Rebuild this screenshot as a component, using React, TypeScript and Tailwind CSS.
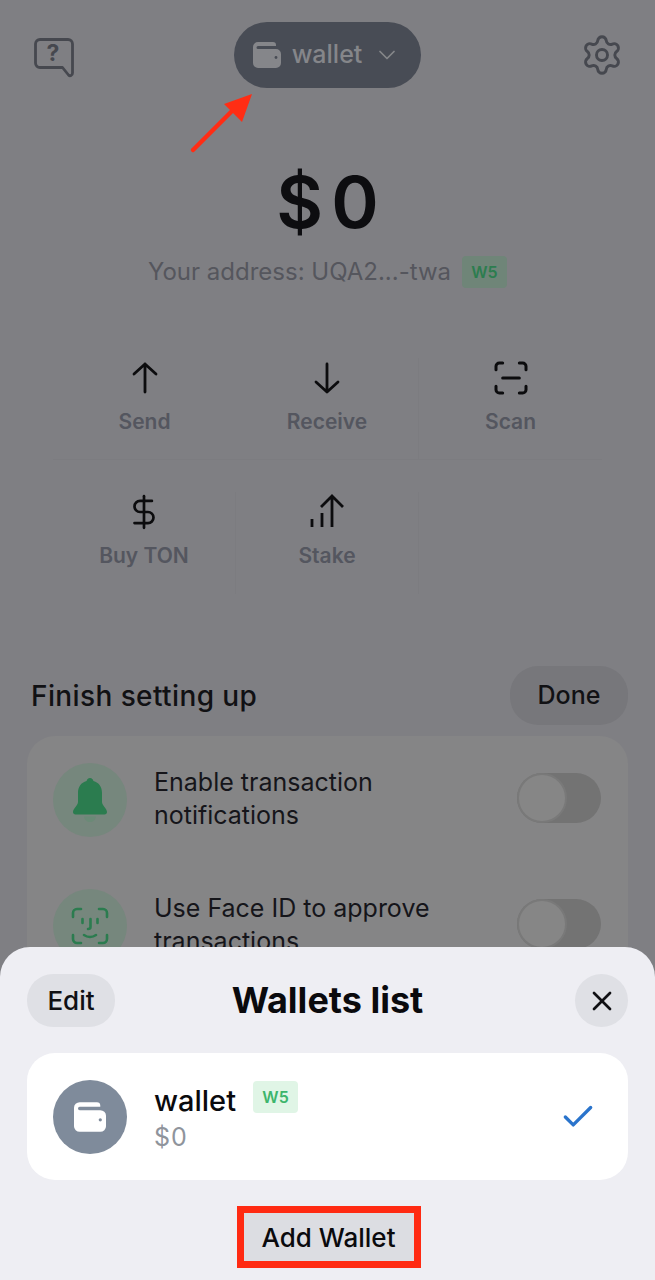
import { Check, ChevronDown, DollarSign, ScanLine, Settings, X } from 'lucide-react';
import type { ReactNode } from 'react';

function WalletIcon({ className, hole }: { className?: string; hole: string }) {
  return (
    <svg viewBox="0 0 28 26" className={className} fill="currentColor">
      <path d="M5 0h15a3 3 0 0 1 3 3v1H5a1.5 1.5 0 0 0 0 3h18a5 5 0 0 1 5 5v9a5 5 0 0 1-5 5H5a5 5 0 0 1-5-5V5a5 5 0 0 1 5-5z" />
      <circle cx="23" cy="15.5" r="1.4" fill={hole} />
    </svg>
  );
}

function HelpIcon() {
  return (
    <svg viewBox="0 0 40 40" className="w-10 h-10" fill="none" stroke="#46484f" strokeWidth="2.8" strokeLinejoin="round">
      <path d="M6 1.500h28a4.500 4.500 0 0 1 4.500 4.500v29c0 2.500-2.500 3.500-4 2l-6-7.500H6A4.500 4.500 0 0 1 1.500 25V6A4.500 4.500 0 0 1 6 1.500z" />
      <text x="19" y="23" textAnchor="middle" fontSize="23" fontWeight="700" fill="#46484f" stroke="none" fontFamily="Inter, sans-serif">?</text>
    </svg>
  );
}

function ArrowIcon({ down }: { down?: boolean }) {
  return (
    <svg viewBox="0 0 40 40" className="w-10 h-10" fill="none" stroke="#0c0c0e" strokeWidth="2.8" strokeLinecap="round" strokeLinejoin="round">
      <path d={down ? 'M20 6v28M9 24l11 10 11-10' : 'M20 34V6M9 16 20 6l11 10'} />
    </svg>
  );
}

function StakeIcon() {
  return (
    <svg viewBox="0 0 38 38" className="w-[38px] h-[38px]" fill="none" stroke="#0c0c0e" strokeWidth="2.800">
      <path d="M4 34v-8M14 34V20M24 34V4M13 14 24 3l11 11" />
    </svg>
  );
}

function BellIcon() {
  return (
    <svg viewBox="0 0 34 44" className="w-[34px] h-11" fill="#2b7c4f">
      <path d="M17 0c2 0 3 1.400 3.400 3C26 4.500 29 9 29 15v9c0 3 5 7 5 10 0 1.500-1 2.500-2.500 2.500h-29C1 36.500 0 35.500 0 34c0-3 5-7 5-10v-9C5 9 8 4.500 13.600 3 14 1.400 15 0 17 0z" />
      <path d="M11 38.500h12c-.5 3.500-3 5.500-6 5.500s-5.500-2-6-5.500z" fill="#6b8a77" />
    </svg>
  );
}

function FaceIcon() {
  return (
    <svg viewBox="0 0 38 38" className="w-[38px] h-[38px]" fill="none" stroke="#2b7c4f" strokeWidth="2.600" strokeLinecap="round" strokeLinejoin="round">
      <path d="M2 10V6a4 4 0 0 1 4-4h4M28 2h4a4 4 0 0 1 4 4v4M36 28v4a4 4 0 0 1-4 4h-4M10 36H6a4 4 0 0 1-4-4v-4" />
      <path d="M11.500 12v4M26.500 12v4M19.500 12v8c0 1.500-1 2-2.500 2M13 28c3.500 2.500 8.500 2.500 12 0" />
    </svg>
  );
}

function Action({ icon, label, className }: { icon: ReactNode; label: string; className?: string }) {
  return (
    <div className={`flex flex-col items-center h-[102px] border-[#7c7c80] ${className ?? ''}`}>
      <div className="h-10 flex items-center justify-center">{icon}</div>
      <span className="mt-3 text-[21px] leading-6 font-semibold text-[#54565f]">{label}</span>
    </div>
  );
}

function Toggle() {
  return (
    <div className="w-[84px] h-[50px] rounded-full bg-[#737373] shrink-0">
      <div className="w-[50px] h-[50px] rounded-full bg-[#868686] border-2 border-[#797979]" />
    </div>
  );
}

function SetupRow({ icon, lines }: { icon: ReactNode; lines: string[] }) {
  return (
    <div className="flex items-start h-[126px]">
      <div className="w-[74px] h-[74px] rounded-full bg-[#76877d] flex items-center justify-center shrink-0">{icon}</div>
      <div className="ml-[27px] flex-1 text-[25px] leading-[33px] text-[#15151a] mt-[3px]">
        {lines.map((l) => (
          <div key={l}>{l}</div>
        ))}
      </div>
      <div className="mt-[10px]">
        <Toggle />
      </div>
    </div>
  );
}

export default function App() {
  return (
    <div className="relative w-[655px] h-[1280px] overflow-hidden bg-[#7f7f83] font-['Inter',sans-serif]">
      <header className="flex items-start justify-between pl-[34px] pr-[31px] pt-[22px] h-[140px]">
        <div className="mt-4">
          <HelpIcon />
        </div>
        <button className="w-[187px] h-[66px] rounded-[33px] bg-[#484c55] flex items-center justify-center gap-[11px] text-[#85868a]">
          <WalletIcon className="w-[28px] h-[26px]" hole="#484c55" />
          <span className="text-[25px] font-medium">wallet</span>
          <ChevronDown className="w-7 h-7" strokeWidth={1.5} />
        </button>
        <Settings className="mt-[11px] w-[44px] h-[44px] text-[#46484f]" strokeWidth={1.6} />
      </header>

      <div className="flex flex-col items-center">
        <div className="mt-[26px] h-[72px] pl-2 flex items-center text-[72px] font-semibold text-[#0d0d10] tracking-[8px] leading-none">$0</div>
        <div className="mt-[18px] h-8 flex items-center gap-[11px]">
          <span className="text-[24px] text-[#55565d]">Your address: UQA2...-twa</span>
          <span className="w-[45px] h-8 rounded bg-[#6f8578] flex items-center justify-center text-[16px] font-semibold text-[#2c7d4f]">W5</span>
        </div>
      </div>

      <div className="grid grid-cols-3 gap-y-8 w-[549px] ml-[53px] mt-[70px]">
        <Action icon={<ArrowIcon />} label="Send" className="border-b" />
        <Action icon={<ArrowIcon down />} label="Receive" className="border-b border-r" />
        <Action icon={<ScanLine className="w-10 h-10 text-[#0c0c0e]" strokeWidth={1.8} />} label="Scan" className="border-b" />
        <Action icon={<DollarSign className="w-[38px] h-[38px] text-[#0c0c0e]" strokeWidth={1.7} />} label="Buy TON" className="border-r" />
        <Action icon={<StakeIcon />} label="Stake" className="border-r" />
      </div>

      <div className="flex items-center justify-between pl-[31px] pr-[27px] mt-[72px] h-[59px]">
        <h2 className="text-[28px] tracking-[0.4px] font-medium text-[#111114]">Finish setting up</h2>
        <button className="w-[118px] h-[59px] rounded-[28px] bg-[#77777b] text-[25px] font-medium text-[#111114]">Done</button>
      </div>

      <div className="mx-[27px] mt-[11px] rounded-[28px] bg-[#858586] pt-[27px] pl-[26px] pr-[27px] h-[300px]">
        <SetupRow icon={<BellIcon />} lines={['Enable transaction', 'notifications']} />
        <SetupRow icon={<FaceIcon />} lines={['Use Face ID to approve', 'transactions']} />
      </div>

      {/* annotation arrow */}
      <svg viewBox="0 0 70 70" className="absolute left-[188px] top-[90px] w-[70px] h-[70px]">
        <path d="M5 60 46 19" stroke="#ff2d14" strokeWidth="4.500" strokeLinecap="round" />
        <path d="M64 4 54 32 36 14z" fill="#ff2d14" />
      </svg>

      <div className="absolute left-0 right-0 bottom-0 h-[333px] rounded-t-[30px] bg-[#eeeef3] px-[27px] pt-[27px]">
        <div className="grid grid-cols-[88px_1fr_88px] items-center h-[53px]">
          <button className="w-[88px] h-[53px] rounded-[26px] bg-[#dfe0e5] text-[26px] font-medium text-[#101014]">Edit</button>
          <h1 className="text-center text-[36px] leading-[53px] font-bold text-[#0a0a0d]">Wallets list</h1>
          <button className="justify-self-end w-[53px] h-[53px] rounded-full bg-[#dfe0e5] flex items-center justify-center">
            <X className="w-8 h-8 text-[#101014]" strokeWidth={2} />
          </button>
        </div>

        <div className="mt-[26px] h-[127px] rounded-[28px] bg-white flex items-center pl-[26px] pr-[31px]">
          <div className="w-[74px] h-[74px] rounded-full bg-[#7f8b9b] flex items-center justify-center shrink-0">
            <WalletIcon className="w-8 h-[30px] text-white" hole="#7f8b9b" />
          </div>
          <div className="ml-[27px] flex-1">
            <div className="flex items-start gap-[17px] h-[36px]">
              <span className="text-[29px] leading-9 mt-[2px] font-medium text-[#0a0a0d]">wallet</span>
              <span className="w-[45px] h-8 rounded bg-[#e0f5e6] flex items-center justify-center text-[16px] font-semibold text-[#3db56c]">W5</span>
            </div>
            <div className="mt-[4px] text-[25px] tracking-[1px] leading-8 text-[#8f949c]">$0</div>
          </div>
          <Check className="w-[38px] h-[38px] text-[#2a74cc]" strokeWidth={2.1} />
        </div>

        <div className="flex justify-center mt-[26px] pl-[2px]">
          <button className="w-[184px] h-[62px] border-[7px] border-[#ff2a12] bg-[#dcdde2] text-[26px] font-medium text-[#0a0a0d]">Add Wallet</button>
        </div>
      </div>
    </div>
  );
}
